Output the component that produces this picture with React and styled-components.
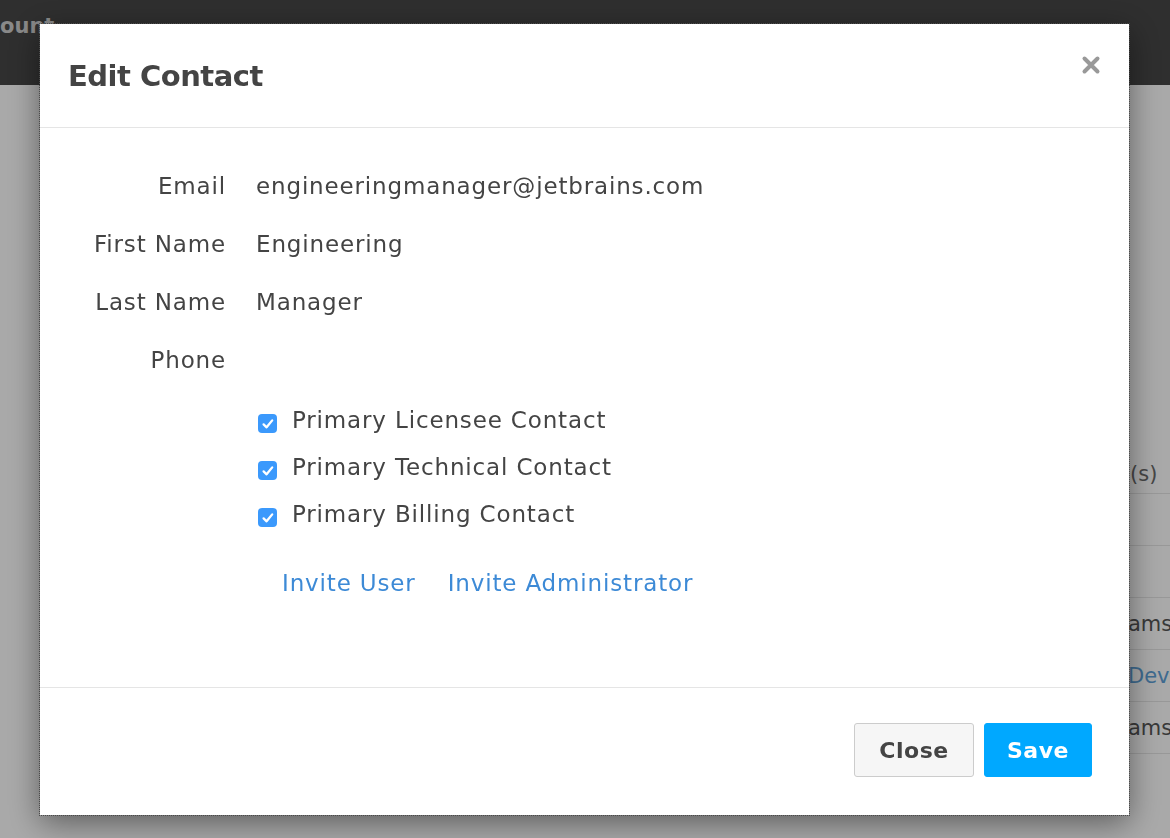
import React from "react";
import styled, { createGlobalStyle } from "styled-components";

const FONT = `"DejaVu Sans", "Open Sans", sans-serif`;

const GlobalStyle = createGlobalStyle`
  html, body {
    margin: 0;
    padding: 0;
    height: 100%;
    background: #ffffff;
    font-family: ${FONT};
    overflow: hidden;
  }
`;

const Page = styled.div`
  width: 1170px;
  height: 838px;
  display: flex;
  flex-direction: column;
`;

const TopBar = styled.header`
  height: 85px;
  background: #474747;
  display: flex;
  align-items: flex-start;
  padding-top: 14px;
  box-sizing: border-box;
  overflow: hidden;
`;

const BrandText = styled.div`
  font-size: 21px;
  font-weight: 700;
  color: #cfcfcf;
`;

const Content = styled.main`
  flex: 1;
  display: flex;
  padding-top: 356px;
`;

const BackTable = styled.div`
  margin-left: 1128px;
  display: flex;
  flex-direction: column;
  width: 200px;
`;

const BackRow = styled.div`
  height: ${(p) => (p.$head ? "53px" : "52px")};
  border-bottom: 1px solid #e6e6e6;
  display: flex;
  align-items: center;
  font-size: 21px;
  color: ${(p) => (p.$link ? "#5ea1d8" : p.$head ? "#6a6a6a" : "#565656")};
  box-sizing: border-box;
  padding-left: ${(p) => (p.$head ? "2px" : "0")};
  padding-top: ${(p) => (p.$head ? "14px" : "0")};
`;

const Overlay = styled.div`
  position: fixed;
  inset: 0;
  background: rgba(0, 0, 0, 0.337);
`;

const Modal = styled.div`
  position: fixed;
  left: 40px;
  top: 24px;
  width: 1089px;
  height: 791px;
  background: #ffffff;
  outline: 1px dotted #4a4a4a;
  box-shadow: 0 8px 30px rgba(0, 0, 0, 0.45);
  display: flex;
  flex-direction: column;
  letter-spacing: 0.85px;
`;

const ModalHeader = styled.div`
  height: 104px;
  border-bottom: 1px solid #e5e5e5;
  box-sizing: border-box;
  display: flex;
  align-items: center;
  justify-content: space-between;
  padding: 0 28px 0 28px;
`;

const Title = styled.h2`
  margin: 0;
  font-size: 29px;
  font-weight: 700;
  letter-spacing: -0.5px;
  color: #444444;
`;

const CloseX = styled.button`
  border: 0;
  background: none;
  padding: 0;
  width: 20px;
  height: 20px;
  margin-bottom: 22px;
  cursor: pointer;
  display: flex;
`;

const Body = styled.div`
  flex: 1;
  padding: 29px 28px 0 28px;
  display: flex;
  flex-direction: column;
`;

const FieldRow = styled.div`
  height: 58px;
  display: grid;
  grid-template-columns: 158px 1fr;
  column-gap: 30px;
  align-items: center;
  font-size: 23px;
  color: #444444;
`;

const Label = styled.span`
  text-align: right;
`;

const Value = styled.span``;

const Checks = styled.div`
  padding-left: 190px;
  padding-top: 7px;
  display: flex;
  flex-direction: column;
`;

const CheckRow = styled.label`
  height: 47px;
  display: flex;
  align-items: center;
  gap: 15px;
  font-size: 23px;
  color: #444444;
`;

const Box = styled.span`
  width: 19px;
  height: 19px;
  border-radius: 4px;
  background: #3b99fc;
  display: flex;
  align-items: center;
  justify-content: center;
  margin-top: 8px;
  flex-shrink: 0;
`;

const Links = styled.div`
  padding-left: 214px;
  padding-top: 33px;
  display: flex;
  gap: 32px;
`;

const Link = styled.a`
  font-size: 23px;
  color: #3d8ad6;
  text-decoration: none;
  cursor: pointer;
`;

const Footer = styled.div`
  height: 128px;
  border-top: 1px solid #e5e5e5;
  box-sizing: border-box;
  display: flex;
  justify-content: flex-end;
  align-items: flex-start;
  gap: 10px;
  padding: 35px 37px 0 0;
`;

const Button = styled.button`
  height: 54px;
  padding: 0;
  width: ${(p) => (p.$primary ? "108px" : "120px")};
  border-radius: 3px;
  border: 1px solid ${(p) => (p.$primary ? "#00a8ff" : "#cccccc")};
  background: ${(p) => (p.$primary ? "#00a8ff" : "#f6f6f6")};
  color: ${(p) => (p.$primary ? "#ffffff" : "#444444")};
  font-family: ${FONT};
  font-size: 22px;
  font-weight: 700;
  letter-spacing: 0.5px;
  cursor: pointer;
`;

const CheckIcon = () => (
  <svg width="14" height="14" viewBox="0 0 14 14">
    <path d="M2.6 7.4 L5.6 10.3 L11.2 3.4" fill="none" stroke="#fff" strokeWidth="2.3" strokeLinecap="round" strokeLinejoin="round" />
  </svg>
);

const XIcon = () => (
  <svg width="20" height="20" viewBox="0 0 20 20">
    <path d="M3.5 3.5 L16.5 16.5 M16.5 3.5 L3.5 16.5" stroke="#999" strokeWidth="4" strokeLinecap="round" />
  </svg>
);

const fields = [
  ["Email", "engineeringmanager@jetbrains.com"],
  ["First Name", "Engineering"],
  ["Last Name", "Manager"],
  ["Phone", ""],
];

const contacts = [
  "Primary Licensee Contact",
  "Primary Technical Contact",
  "Primary Billing Contact",
];

export default function App() {
  return (
    <>
      <GlobalStyle />
      <Page>
        <TopBar>
          <BrandText>ount</BrandText>
        </TopBar>
        <Content>
          <BackTable>
            <BackRow $head>(s)</BackRow>
            <BackRow />
            <BackRow />
            <BackRow>ams</BackRow>
            <BackRow $link>Dev</BackRow>
            <BackRow>ams</BackRow>
          </BackTable>
        </Content>
      </Page>
      <Overlay />
      <Modal>
        <ModalHeader>
          <Title>Edit Contact</Title>
          <CloseX aria-label="Close">
            <XIcon />
          </CloseX>
        </ModalHeader>
        <Body>
          {fields.map(([label, value]) => (
            <FieldRow key={label}>
              <Label>{label}</Label>
              <Value>{value}</Value>
            </FieldRow>
          ))}
          <Checks>
            {contacts.map((c) => (
              <CheckRow key={c}>
                <Box>
                  <CheckIcon />
                </Box>
                {c}
              </CheckRow>
            ))}
          </Checks>
          <Links>
            <Link>Invite User</Link>
            <Link>Invite Administrator</Link>
          </Links>
        </Body>
        <Footer>
          <Button>Close</Button>
          <Button $primary>Save</Button>
        </Footer>
      </Modal>
    </>
  );
}
